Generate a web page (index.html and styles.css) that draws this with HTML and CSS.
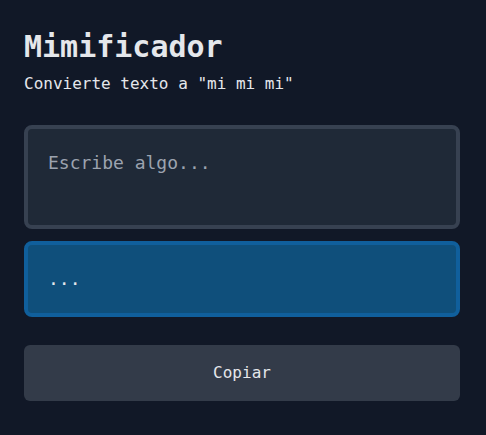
FILE: index.html
```html
<!DOCTYPE html>
<html lang="es">
<head>
<meta charset="utf-8">
<title>Mimificador</title>
<link rel="stylesheet" href="styles.css">
</head>
<body>
<main class="app">
  <h1 class="title">Mimificador</h1>
  <p class="subtitle">Convierte texto a "mi mi mi"</p>
  <textarea class="input" placeholder="Escribe algo..."></textarea>
  <div class="output">...</div>
  <button class="copy" type="button">Copiar</button>
</main>
</body>
</html>
```
FILE: styles.css
```css
* { box-sizing: border-box; }
html, body {
  margin: 0;
  padding: 0;
  background: #111827;
  height: 100%;
}
body {
  font-family: "DejaVu Sans Mono", monospace;
  color: #e5e7eb;
}
.app {
  display: flex;
  flex-direction: column;
  padding: 29px 26px 24px 24px;
}
.title {
  margin: 0;
  font-size: 30px;
  line-height: 36px;
  font-weight: bold;
  color: #e5e7eb;
}
.subtitle {
  margin: 7px 0 0;
  font-size: 16px;
  line-height: 24px;
  color: #e5e7eb;
}
.input {
  margin-top: 29px;
  height: 104px;
  padding: 20px;
  background: #1f2937;
  border: 4px solid #374151;
  border-radius: 8px;
  font-family: "DejaVu Sans Mono", monospace;
  font-size: 18px;
  line-height: 28px;
  color: #e5e7eb;
  resize: none;
  outline: none;
}
.input::placeholder { color: #9ca3af; opacity: 1; }
.output {
  margin-top: 12px;
  height: 76px;
  padding: 20px;
  background: #0f4f7b;
  border: 4px solid #105f9c;
  border-radius: 8px;
  font-size: 18px;
  line-height: 28px;
  color: #e5e7eb;
}
.copy {
  margin-top: 28px;
  height: 56px;
  border: none;
  border-radius: 6px;
  background: #333b49;
  color: #e5e7eb;
  font-family: "DejaVu Sans Mono", monospace;
  font-size: 16px;
  line-height: 24px;
}
```
